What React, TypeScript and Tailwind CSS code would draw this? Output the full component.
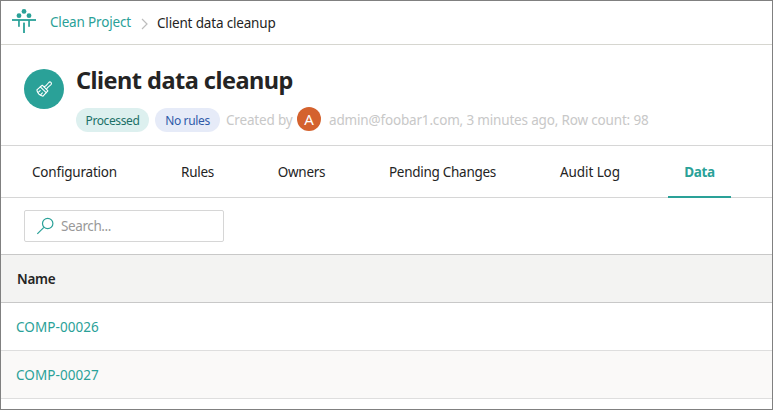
const tabs = [
  { label: 'Configuration', size: 'w-[117px] tracking-[-0.2px]' },
  { label: 'Rules', size: 'w-[65px] tracking-[-0.3px]' },
  { label: 'Owners', size: 'w-[79px] tracking-[-0.3px]' },
  { label: 'Pending Changes', size: 'w-[139px] tracking-[-0.28px]' },
  { label: 'Audit Log', size: 'w-[92px] tracking-[-0.1px]' },
];

function Logo() {
  return (
    <svg width="26" height="26" viewBox="0 0 26 26" className="shrink-0" fill="#2aa198">
      <circle cx="13" cy="3.4" r="2.4" />
      <circle cx="8" cy="7.7" r="2.4" />
      <circle cx="18" cy="7.7" r="2.4" />
      <rect x="1" y="11.1" width="24" height="1.8" />
      <rect x="7.1" y="12" width="1.7" height="6.8" />
      <rect x="17.2" y="12" width="1.7" height="6.8" />
      <rect x="12.1" y="14.6" width="1.8" height="10.4" />
    </svg>
  );
}

function Brush() {
  return (
    <svg width="18" height="18" viewBox="0 0 18 18" fill="none" stroke="white" strokeWidth="1.1" strokeLinecap="round" strokeLinejoin="round">
      <path d="M7.3 5.2 12.9 10.8 11.2 12.7 5.3 6.8z" />
      <path d="M5.3 6.8 1.9 9.9Q2.4 14.8 8 16.2L11.2 12.7M3.2 12.4 5.2 10.6M5.6 14.8 7.4 12.9" />
      <path d="M9 6.8 10.6 6.1 13.8 2.5a1.4 1.4 0 0 1 2.2 2.1L12.3 7.9 11.5 9.3" />
    </svg>
  );
}

export default function App() {
  return (
    <div className="flex h-[410px] w-[773px] flex-col overflow-hidden border border-[#808080] bg-white font-['Noto_Sans','Open_Sans',sans-serif] text-[13.5px] text-[#242424]">
      <header className="flex h-11 shrink-0 items-center border-b border-[#d6d6d0] pl-[10px] whitespace-nowrap">
        <div className="-mt-[3px]"><Logo /></div>
        <a className="ml-[13px] w-[82px] pb-px tracking-[-0.17px] text-[#2aa198]">Clean Project</a>
        <svg width="8" height="12" viewBox="0 0 8 12" className="mt-[3px] ml-[9px]" fill="none" stroke="#bdbdbd" strokeWidth="1.2">
          <path d="m1 1 5 5-5 5" />
        </svg>
        <span className="ml-2 pt-px tracking-[-0.17px]">Client data cleanup</span>
      </header>

      <section className="flex h-[101px] shrink-0 border-b border-[#d6d6d6] pl-[23px] whitespace-nowrap">
        <div className="mt-6 flex size-10 shrink-0 items-center justify-center rounded-full bg-[#2aa198]">
          <Brush />
        </div>
        <div className="ml-3 pt-[17px]">
          <h1 className="h-[36px] text-[23.5px] leading-[36px] font-bold tracking-[-0.52px]">Client data cleanup</h1>
          <div className="mt-[10px] flex h-6 items-center text-[#c8c8c8]">
            <span className="flex h-6 w-[73px] items-center justify-center rounded-full bg-[#ddf0ef] pt-px text-[12px] tracking-[-0.38px] text-[#1c7068]">Processed</span>
            <span className="ml-1.5 flex h-6 w-[65px] items-center justify-center rounded-full bg-[#e6ebf8] pt-px text-[12px] tracking-[-0.35px] text-[#2e5aa8]">No rules</span>
            <span className="ml-1.5 w-[71px] pt-px tracking-[-0.18px]">Created by</span>
            <span className="-mt-0.5 flex size-6 items-center justify-center rounded-full bg-[#d4622e] text-[15px] text-white">A</span>
            <span className="ml-2 pt-px tracking-[-0.17px]">admin@foobar1.com, 3 minutes ago, Row count: 98</span>
          </div>
        </div>
      </section>

      <nav className="flex h-[52px] shrink-0 gap-8 border-b border-[#d6d6d6] pl-[15px] whitespace-nowrap">
        {tabs.map((tab) => (
          <a key={tab.label} className={`flex h-[52px] items-center justify-center ${tab.size}`}>{tab.label}</a>
        ))}
        <a className="flex h-[52px] w-[63px] items-center justify-center border-b-2 border-[#2aa198] pt-0.5 font-bold tracking-[-0.3px] text-[#2aa198]">Data</a>
      </nav>

      <div className="flex h-[57px] shrink-0 items-center border-b border-[#c8c8c8] pl-[23px]">
        <label className="flex h-8 w-[200px] items-center rounded-[2px] border border-[#d6d6d6] pl-[11px]">
          <svg width="18" height="18" viewBox="0 0 18 18" fill="none" stroke="#2aa198" strokeWidth="1.2">
            <circle cx="11.7" cy="6.5" r="5.2" />
            <path d="M7.9 10.3 1.3 16.9" />
          </svg>
          <span className="ml-[7px] pt-px tracking-[-0.4px] text-[#999]">Search...</span>
        </label>
      </div>

      <div className="flex h-12 shrink-0 items-center border-b border-[#c8c8c8] bg-[#f3f3f2] pt-0.5 pl-4 font-semibold tracking-[-0.3px]">Name</div>
      <div className="flex h-12 shrink-0 items-center border-b border-[#dedede] pt-0.5 pl-[15px] tracking-[0.07px] text-[#2aa198]">COMP-00026</div>
      <div className="flex h-12 shrink-0 items-center border-b border-[#dedede] bg-[#faf9f8] pt-0.5 pl-[15px] tracking-[0.07px] text-[#2aa198]">COMP-00027</div>
    </div>
  );
}
